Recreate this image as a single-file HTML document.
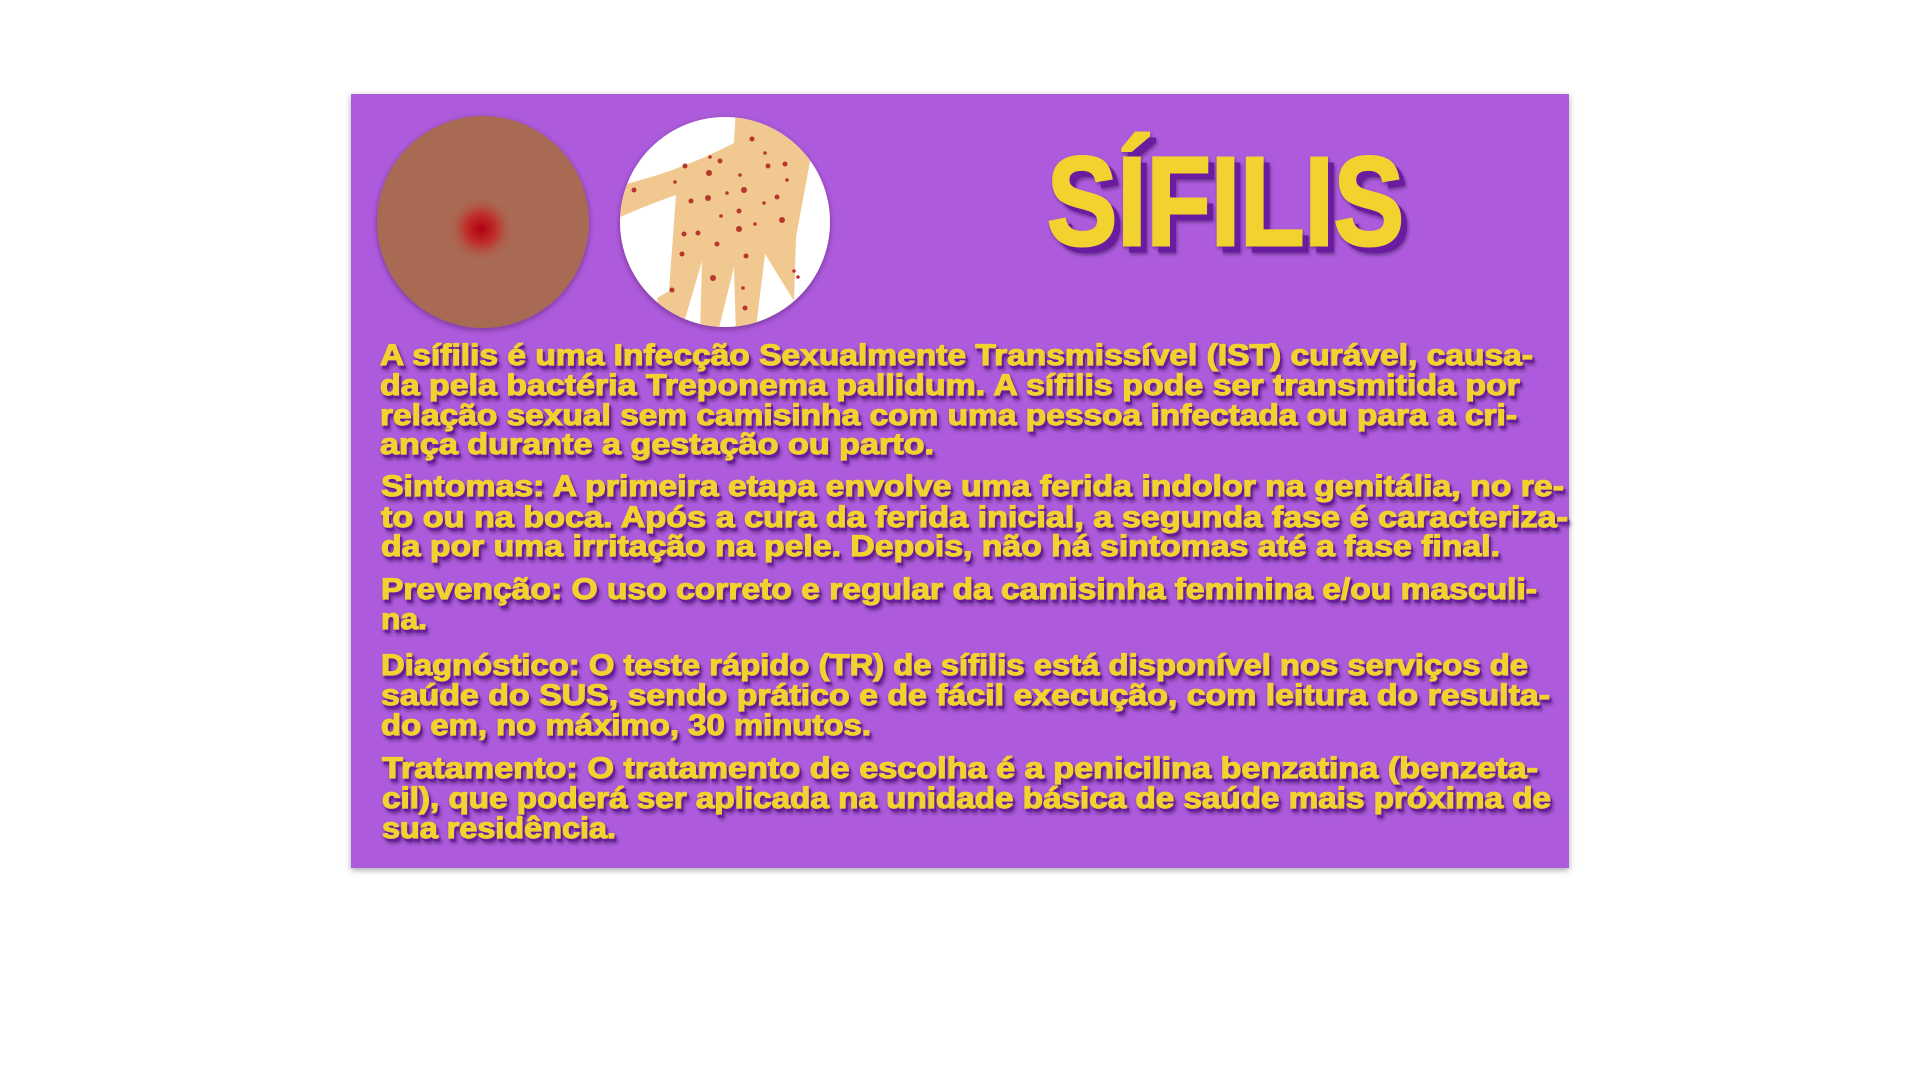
<!DOCTYPE html>
<html><head><meta charset="utf-8"><style>
html,body{margin:0;padding:0;background:#fff;width:1920px;height:1080px;overflow:hidden}
.card{position:absolute;left:351px;top:94px;width:1218px;height:774px;background:#ad5bdc;box-shadow:0 2px 6px rgba(0,0,0,.35)}
svg{position:absolute;left:0;top:0}
</style></head><body>
<div class="card"></div>
<svg width="1920" height="1080" viewBox="0 0 1920 1080">
<defs>
<radialGradient id="sore" cx="0.5" cy="0.5" r="0.5">
<stop offset="0" stop-color="#b00010"/><stop offset="0.45" stop-color="#c0302a"/><stop offset="1" stop-color="#a96a52" stop-opacity="0"/>
</radialGradient>
<filter id="sh" x="-20%" y="-20%" width="140%" height="140%"><feDropShadow dx="0" dy="2" stdDeviation="3" flood-color="#3a1050" flood-opacity="0.5"/></filter>
<filter id="tsh" x="-5%" y="-20%" width="110%" height="150%"><feDropShadow dx="1" dy="2" stdDeviation="1.5" flood-color="#2a0a40" flood-opacity="0.5"/></filter>
<clipPath id="c2"><circle cx="105" cy="106" r="105"/></clipPath>
</defs>
<circle cx="483" cy="222" r="106" fill="#a96a52" filter="url(#sh)"/>
<circle cx="481" cy="229" r="34" fill="url(#sore)"/>
<circle cx="725" cy="222" r="105" fill="#fff" filter="url(#sh)"/>
<g transform="translate(620,116)">
<g clip-path="url(#c2)">
<path d="M114,27 Q60,55 2,69 L0,101 Q30,88 56,79 L49,175 L37,182 L45,220 L60,220 L82,145 L80,220 L97,220 L114,151 L116,220 L135,220 L145,138 L174,185 L176,121 L191,40 L230,20 L150,-20 L116,-10 Z" fill="#f0c890"/>
<g fill="#b8362e">
<circle cx="132" cy="23" r="2.5"/><circle cx="145" cy="37" r="1.8"/><circle cx="100" cy="45" r="2.5"/><circle cx="90" cy="41" r="1.8"/><circle cx="65" cy="50" r="2.5"/><circle cx="89" cy="57" r="3"/><circle cx="120" cy="59" r="1.8"/><circle cx="148" cy="50" r="2.5"/><circle cx="165" cy="48" r="2.5"/><circle cx="167" cy="64" r="1.8"/><circle cx="55" cy="66" r="1.8"/><circle cx="14" cy="74" r="2.5"/><circle cx="71" cy="85" r="2.5"/><circle cx="88" cy="82" r="3"/><circle cx="107" cy="77" r="1.8"/><circle cx="124" cy="74" r="3"/><circle cx="157" cy="81" r="2.5"/><circle cx="144" cy="87" r="1.8"/><circle cx="119" cy="95" r="2.5"/><circle cx="101" cy="100" r="1.8"/><circle cx="135" cy="108" r="1.8"/><circle cx="162" cy="104" r="3"/><circle cx="119" cy="113" r="3"/><circle cx="64" cy="118" r="2.5"/><circle cx="78" cy="117" r="2.5"/><circle cx="97" cy="128" r="2.5"/><circle cx="62" cy="138" r="2.5"/><circle cx="126" cy="140" r="2.5"/><circle cx="174" cy="155" r="1.8"/><circle cx="178" cy="161" r="1.8"/><circle cx="93" cy="162" r="3"/><circle cx="123" cy="172" r="1.8"/><circle cx="52" cy="174" r="2.5"/><circle cx="125" cy="192" r="2.5"/>
</g>
</g>
</g>
<g font-family="Liberation Sans, sans-serif" font-weight="bold">
<g filter="url(#tsh)">
<text x="1053" y="251" font-size="126" textLength="357" lengthAdjust="spacingAndGlyphs" fill="#6a1fa0" stroke="#6a1fa0" stroke-width="3">SÍFILIS</text>
<text x="1047" y="245" font-size="126" textLength="357" lengthAdjust="spacingAndGlyphs" fill="#f2d22e" stroke="#f2d22e" stroke-width="3">SÍFILIS</text>
</g>
<g font-size="30" filter="url(#tsh)">
<g fill="#6a1fa0" stroke="#6a1fa0" stroke-width="1.2" transform="translate(2,3)">
<text x="380" y="365" textLength="1153" lengthAdjust="spacingAndGlyphs">A sífilis é uma Infecção Sexualmente Transmissível (IST) curável, causa-</text>
<text x="380" y="395" textLength="1140" lengthAdjust="spacingAndGlyphs">da pela bactéria Treponema pallidum. A sífilis pode ser transmitida por</text>
<text x="380" y="425" textLength="1137" lengthAdjust="spacingAndGlyphs">relação sexual sem camisinha com uma pessoa infectada ou para a cri-</text>
<text x="380" y="454" textLength="554" lengthAdjust="spacingAndGlyphs">ança durante a gestação ou parto.</text>
<text x="381" y="496" textLength="1183" lengthAdjust="spacingAndGlyphs">Sintomas: A primeira etapa envolve uma ferida indolor na genitália, no re-</text>
<text x="381" y="527" textLength="1187" lengthAdjust="spacingAndGlyphs">to ou na boca. Após a cura da ferida inicial, a segunda fase é caracteriza-</text>
<text x="381" y="556" textLength="1119" lengthAdjust="spacingAndGlyphs">da por uma irritação na pele. Depois, não há sintomas até a fase final.</text>
<text x="381" y="599" textLength="1156" lengthAdjust="spacingAndGlyphs">Prevenção: O uso correto e regular da camisinha feminina e/ou masculi-</text>
<text x="381" y="629" textLength="46" lengthAdjust="spacingAndGlyphs">na.</text>
<text x="381" y="675" textLength="1147" lengthAdjust="spacingAndGlyphs">Diagnóstico: O teste rápido (TR) de sífilis está disponível nos serviços de</text>
<text x="381" y="705" textLength="1169" lengthAdjust="spacingAndGlyphs">saúde do SUS, sendo prático e de fácil execução, com leitura do resulta-</text>
<text x="381" y="735" textLength="490" lengthAdjust="spacingAndGlyphs">do em, no máximo, 30 minutos.</text>
<text x="382" y="778" textLength="1156" lengthAdjust="spacingAndGlyphs">Tratamento: O tratamento de escolha é a penicilina benzatina (benzeta-</text>
<text x="382" y="808" textLength="1169" lengthAdjust="spacingAndGlyphs">cil), que poderá ser aplicada na unidade básica de saúde mais próxima de</text>
<text x="382" y="838" textLength="234" lengthAdjust="spacingAndGlyphs">sua residência.</text>
</g>
<g fill="#f2d22e" stroke="#f2d22e" stroke-width="1.2">
<text x="380" y="365" textLength="1153" lengthAdjust="spacingAndGlyphs">A sífilis é uma Infecção Sexualmente Transmissível (IST) curável, causa-</text>
<text x="380" y="395" textLength="1140" lengthAdjust="spacingAndGlyphs">da pela bactéria Treponema pallidum. A sífilis pode ser transmitida por</text>
<text x="380" y="425" textLength="1137" lengthAdjust="spacingAndGlyphs">relação sexual sem camisinha com uma pessoa infectada ou para a cri-</text>
<text x="380" y="454" textLength="554" lengthAdjust="spacingAndGlyphs">ança durante a gestação ou parto.</text>
<text x="381" y="496" textLength="1183" lengthAdjust="spacingAndGlyphs">Sintomas: A primeira etapa envolve uma ferida indolor na genitália, no re-</text>
<text x="381" y="527" textLength="1187" lengthAdjust="spacingAndGlyphs">to ou na boca. Após a cura da ferida inicial, a segunda fase é caracteriza-</text>
<text x="381" y="556" textLength="1119" lengthAdjust="spacingAndGlyphs">da por uma irritação na pele. Depois, não há sintomas até a fase final.</text>
<text x="381" y="599" textLength="1156" lengthAdjust="spacingAndGlyphs">Prevenção: O uso correto e regular da camisinha feminina e/ou masculi-</text>
<text x="381" y="629" textLength="46" lengthAdjust="spacingAndGlyphs">na.</text>
<text x="381" y="675" textLength="1147" lengthAdjust="spacingAndGlyphs">Diagnóstico: O teste rápido (TR) de sífilis está disponível nos serviços de</text>
<text x="381" y="705" textLength="1169" lengthAdjust="spacingAndGlyphs">saúde do SUS, sendo prático e de fácil execução, com leitura do resulta-</text>
<text x="381" y="735" textLength="490" lengthAdjust="spacingAndGlyphs">do em, no máximo, 30 minutos.</text>
<text x="382" y="778" textLength="1156" lengthAdjust="spacingAndGlyphs">Tratamento: O tratamento de escolha é a penicilina benzatina (benzeta-</text>
<text x="382" y="808" textLength="1169" lengthAdjust="spacingAndGlyphs">cil), que poderá ser aplicada na unidade básica de saúde mais próxima de</text>
<text x="382" y="838" textLength="234" lengthAdjust="spacingAndGlyphs">sua residência.</text>
</g>
</g>
</g>
</svg>
</body></html>
